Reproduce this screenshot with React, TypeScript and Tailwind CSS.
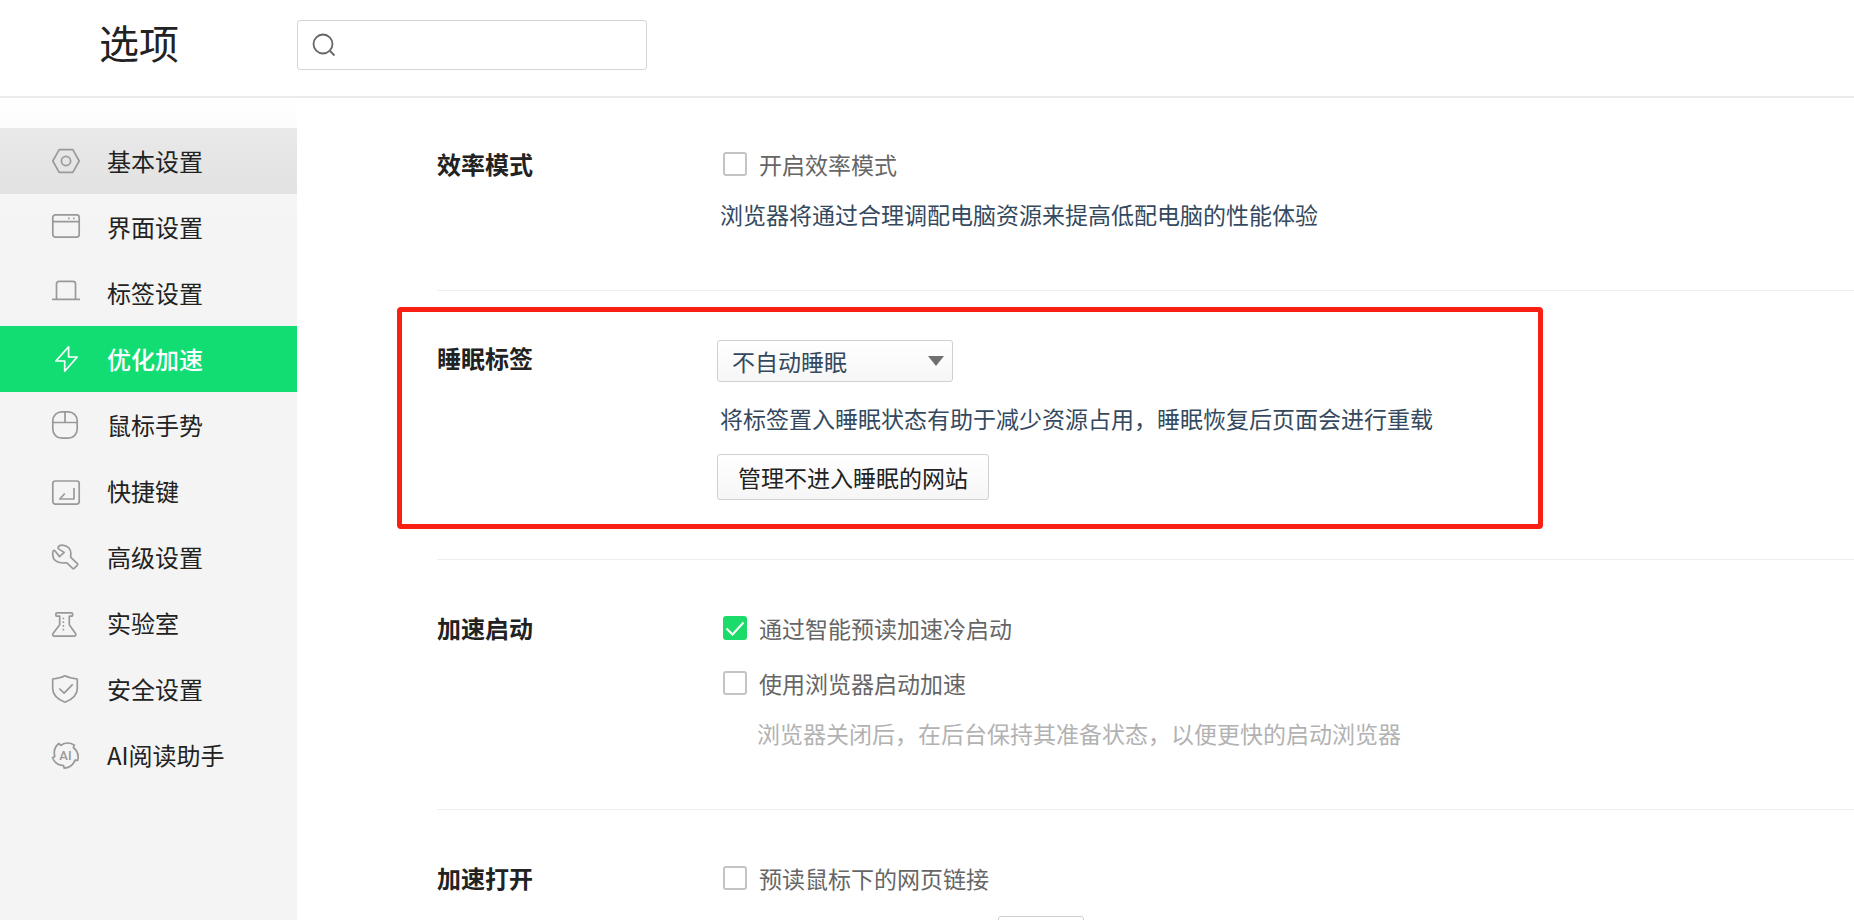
import { useState, type ReactNode } from "react";

const menuItems = [
    { id: "basic", label: "基本设置" },
    { id: "interface", label: "界面设置" },
    { id: "tabs", label: "标签设置" },
    { id: "speed", label: "优化加速" },
    { id: "mouse", label: "鼠标手势" },
    { id: "shortcut", label: "快捷键" },
    { id: "advanced", label: "高级设置" },
    { id: "lab", label: "实验室" },
    { id: "security", label: "安全设置" },
    { id: "ai", label: "AI阅读助手" },
];

const icons: Record<string, ReactNode> = {
    basic: (
        <>
            <path d="M7.2 2.6h13.6L27.2 14l-6.4 11.4H7.2L.8 14z" />
            <circle cx="14" cy="14" r="4.6" />
        </>
    ),
    interface: (
        <>
            <rect x=".8" y="1.8" width="26.4" height="22.4" rx="2.6" />
            <path d="M.8 8.6h26.4M16 5.3h1.6M21 5.3h1.6" />
        </>
    ),
    tabs: <path d="M0 20.3h28M4.5 20V5a2.600 2.600 0 0 1 2.600-2.600h13.800A2.600 2.600 0 0 1 23.500 5v15" />,
    speed: <path d="M16.600 1.800v10.200h8.600L12.700 26.200V16H3.900z" />,
    mouse: (
        <>
            <rect x=".8" y=".8" width="24.400" height="26.400" rx="9" />
            <path d="M.8 11.500h24.400M13 .8v10.700" />
        </>
    ),
    shortcut: (
        <>
            <rect x=".8" y="4" width="26.400" height="23.200" rx="2.600" />
            <path d="M22 11v11H7.800l5-5.500" />
        </>
    ),
    advanced: (
        <path d="M6 4.200C7 2.500 9 2 11.500 2.300c4.500.5 7.500 4 7.400 8.200-.1 1.500-.4 2.700-.1 3.800l6.600 6.400c.5.500.5 1 0 1.500l-3.200 3.200c-.5.500-1 .5-1.500 0l-5.900-5.500c-1-.4-2.300.2-4.100.1C5.200 19.800 1 17 .7 11.800c-.1-1.600.1-3 .7-4 .4-.6 1-.6 1.500 0L7.500 13.600l4.700-4.200L7.300 6.400C6.200 5.700 5.600 5 6 4.200z" />
    ),
    lab: (
        <>
            <path d="M4.900 3.800h14.700c.6 0 1 .4 1 1v1.400c0 .6-.4 1-1 1h-2.300v8.500l6.200 8.900c.7 1.200.3 2.500-1 2.500H2C.7 27.100.3 25.800 1 24.600l6.700-8.900V7.200H4.900c-.6 0-1-.4-1-1V4.800c0-.6.400-1 1-1z" />
            <path d="M10.600 9.500h1.600M10.600 13.200h1.600M10.600 16.900h1.600M10.600 20.600h1.600" />
        </>
    ),
    security: (
        <>
            <path d="M13 .8c3.800 2 8 2.800 12.300 3.200v9.500c0 6.500-5 10.900-12.300 13.700C5.700 24.400.7 20 .7 13.500V4C5 3.600 9.200 2.800 13 .8z" />
            <path d="M7.300 13.500l4.800 4.700 8.600-8.800" />
        </>
    ),
    ai: (
        <>
            <path d="M8.800 4.300A12.500 12.500 0 0 1 22.400 4.100L21.300 6.500A12.500 12.500 0 0 1 25.700 19.400L23 19.100A12.500 12.500 0 0 1 12.100 27.200L11.600 24.600A12.500 12.500 0 0 1 .5 16.800L2.800 15.500A12.500 12.500 0 0 1 6.800 2.500z" />
            <text x="13.500" y="18.600" textAnchor="middle" fontSize="13" stroke="none" fill="currentColor" fontFamily="Roboto, sans-serif" fontWeight="500">AI</text>
        </>
    ),
};

function MenuIcon({ id }: { id: string }) {
    return (
        <svg className="w-7 h-7 shrink-0 overflow-visible" viewBox="0 0 28 28" fill="none" stroke="currentColor" strokeWidth={1.7} strokeLinejoin="round" aria-hidden="true">
            {icons[id]}
        </svg>
    );
}

function CheckOption({ label, defaultChecked = false }: { label: string; defaultChecked?: boolean }) {
    const [checked, setChecked] = useState(defaultChecked);
    return (
        <label className="flex items-center gap-3 pl-1.5 h-9 text-[23px] leading-8 text-[#666]">
            <span className="relative flex w-6 h-6">
                <input
                    type="checkbox"
                    checked={checked}
                    onChange={e => setChecked(e.target.checked)}
                    className="appearance-none w-6 h-6 rounded-[3px] border-2 border-[#c4c4c4] bg-white checked:bg-[#1bdc6b] checked:border-[#1bdc6b]"
                />
                {checked && (
                    <svg className="absolute inset-0 w-6 h-6 pointer-events-none" viewBox="0 0 24 24" fill="none" stroke="white" strokeWidth={2}>
                        <path d="M3.500 12.500l6 6L20.500 6.500" />
                    </svg>
                )}
            </span>
            {label}
        </label>
    );
}

function Section({ title, children }: { title: string; children: ReactNode }) {
    return (
        <>
            <h2 className="w-[280px] shrink-0 text-2xl leading-9 font-bold text-[#222]">{title}</h2>
            <div className="flex-1 flex flex-col items-start">{children}</div>
        </>
    );
}

export default function App() {
    const [active, setActive] = useState("speed");

    return (
        <div className="h-screen flex flex-col overflow-hidden bg-white font-['Noto_Sans_CJK_SC',sans-serif] text-[#222]">
            {/* Header */}
            <header className="flex items-center h-[98px] pb-1.5 shrink-0 border-b-2 border-[#ebebeb]">
                <h1 className="w-[297px] shrink-0 pl-[99px] pb-1.5 text-[40px] leading-[48px]">选项</h1>
                <label className="flex items-center w-[350px] h-[50px] px-3.5 gap-3 border border-[#d5d5d5] rounded-[3px]">
                    <svg className="w-6 h-6 shrink-0" viewBox="0 0 24 24" fill="none" stroke="#666" strokeWidth={1.8} aria-hidden="true">
                        <circle cx="11" cy="11" r="9.500" />
                        <path d="M17.500 17.500l5 5" />
                    </svg>
                    <input type="search" aria-label="搜索" className="flex-1 min-w-0 outline-none text-xl" />
                </label>
            </header>

            <div className="flex flex-1 min-h-0">
                {/* Sidebar */}
                <nav className="w-[297px] shrink-0 pt-[30px] bg-[linear-gradient(to_bottom,#ffffff,#fcfcfc_30px,#f4f4f4_120px)]">
                    {menuItems.map(item => (
                        <button
                            key={item.id}
                            onClick={() => setActive(item.id)}
                            className={`flex items-center gap-[27px] w-full h-[66px] pl-[52px] text-2xl leading-8 text-left
                                ${item.id === active ? "bg-[#12dd72] text-white font-medium" : item.id === "basic" ? "bg-linear-to-b from-[#e9e9e9] to-[#e2e2e2]" : ""}
                            `}
                        >
                            <span className={item.id === active ? "text-white" : "text-[#999]"}>
                                <MenuIcon id={item.id} />
                            </span>
                            {item.label}
                        </button>
                    ))}
                </nav>

                {/* Settings */}
                <main className="flex-1 min-w-0 pl-[140px] overflow-hidden">
                    <section className="flex h-[193px] pt-12 border-b border-[#efefef]">
                        <Section title="效率模式">
                            <CheckOption label="开启效率模式" />
                            <p className="pl-[3px] mt-4 text-[23px] leading-8 text-[#34495e]">浏览器将通过合理调配电脑资源来提高低配电脑的性能体验</p>
                        </Section>
                    </section>

                    <section className="relative flex h-[269px] pt-[49px] border-b border-[#efefef]">
                        <Section title="睡眠标签">
                            <div className="relative w-[236px]">
                                <select aria-label="睡眠标签" className="appearance-none w-full h-[42px] pl-3.5 border border-[#d0d0d0] rounded-[3px] bg-linear-to-b from-white to-[#f6f6f6] text-[23px] leading-8 text-[#34495e]">
                                    <option>不自动睡眠</option>
                                </select>
                                <svg className="absolute right-[9px] top-4 w-4 h-2.5 pointer-events-none" viewBox="0 0 16 10" fill="#707070">
                                    <path d="M0 0h16L8 10z" />
                                </svg>
                            </div>
                            <p className="pl-[3px] mt-5 text-[23px] leading-8 text-[#34495e] whitespace-nowrap">将标签置入睡眠状态有助于减少资源占用，睡眠恢复后页面会进行重载</p>
                            <button className="mt-5 w-[272px] h-[46px] border border-[#d0d0d0] rounded-[3px] bg-linear-to-b from-white to-[#f6f6f6] text-[23px] leading-8">管理不进入睡眠的网站</button>
                        </Section>
                        {/* Highlight frame */}
                        <div className="absolute -left-10 top-4 bottom-[30px] w-[1146px] border-5 border-[#f92013] rounded-[4px] pointer-events-none"></div>
                    </section>

                    <section className="flex h-[250px] pt-[50px] border-b border-[#efefef]">
                        <Section title="加速启动">
                            <CheckOption label="通过智能预读加速冷启动" defaultChecked />
                            <div className="mt-[19px]">
                                <CheckOption label="使用浏览器启动加速" />
                            </div>
                            <p className="pl-10 mt-4 text-[23px] leading-8 text-[#b2b2b2]">浏览器关闭后，在后台保持其准备状态，以便更快的启动浏览器</p>
                        </Section>
                    </section>

                    <section className="flex pt-[50px]">
                        <Section title="加速打开">
                            <CheckOption label="预读鼠标下的网页链接" />
                            <select aria-label="预读方式" className="appearance-none mt-5 ml-[281px] w-[86px] h-[42px] border border-[#d0d0d0] rounded-[3px] bg-linear-to-b from-white to-[#f6f6f6]"></select>
                        </Section>
                    </section>
                </main>
            </div>
        </div>
    );
}
